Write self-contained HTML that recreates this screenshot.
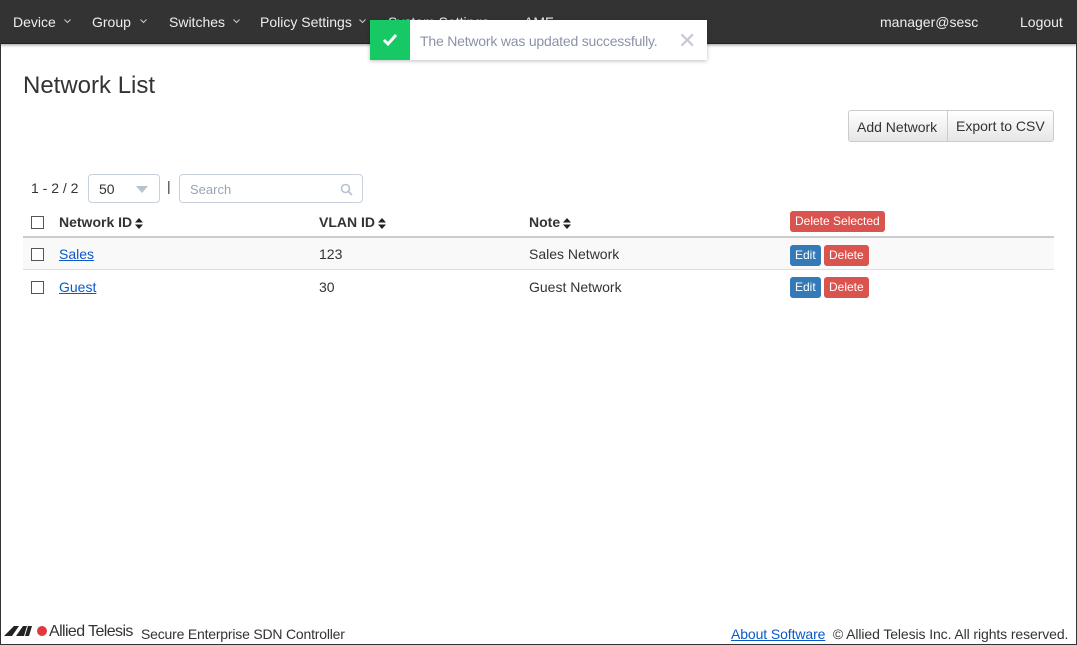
<!DOCTYPE html>
<html><head><meta charset="utf-8"><style>
*{box-sizing:border-box}
body{margin:0;width:1077px;height:645px;overflow:hidden;font-family:"Liberation Sans",sans-serif;color:#333;background:#fff;position:relative}
.frame{position:absolute;left:0;top:0;width:1077px;height:645px;border:1px solid #333;pointer-events:none}
.nav{position:absolute;left:0;top:0;width:1077px;height:44px;background:#333;border-bottom:1px solid #222;box-shadow:0 1px 3px rgba(0,0,0,.4)}
.nav span{position:absolute;top:14px;color:#eee;font-size:14px}
.nav svg{position:absolute;top:19px}
.toast{position:absolute;left:370px;top:20px;width:337px;height:40px;background:#fff;box-shadow:0 1px 4px rgba(0,0,0,.25);}
.toast .ic{position:absolute;left:0;top:0;width:40px;height:40px;background:#17c964}
.toast .t{position:absolute;left:50px;top:13px;font-size:14px;color:#8a93a6;letter-spacing:-.2px}
.toast .x{position:absolute;left:308px;top:8px;font-size:22px;color:#c4c9d2;font-weight:300}
h1{position:absolute;left:23px;top:72px;margin:0;font-size:24px;font-weight:normal;color:#333}
.bg{position:absolute;top:110px;height:32px;border:1px solid #ccc;background:linear-gradient(#fff,#e6e6e6);font-size:14px;padding:8px 8px;color:#333}
.cb{position:absolute;width:13px;height:13px;border:1px solid #555;background:#fff}
.sm{position:absolute;font-size:14px}
.btn{position:absolute;font-size:12px;color:#fff;border-radius:3px;height:21px;line-height:21px;padding:0 5px}
.red{background:#d9534f}.blue{background:#337ab7}
a{color:#0a58ca;text-decoration:underline}
.row{position:absolute;left:23px;width:1031px}
.srt{display:inline-block;vertical-align:middle;margin-left:3px}
</style></head><body>
<div class="nav">
<span style="left:13px">Device</span><svg style="left:64px" width="7" height="5"><path d="M.5 .5l3 3 3-3" stroke="#ccc" fill="none"/></svg>
<span style="left:92px">Group</span><svg style="left:140px" width="7" height="5"><path d="M.5 .5l3 3 3-3" stroke="#ccc" fill="none"/></svg>
<span style="left:169px">Switches</span><svg style="left:233px" width="7" height="5"><path d="M.5 .5l3 3 3-3" stroke="#ccc" fill="none"/></svg>
<span style="left:260px">Policy Settings</span><svg style="left:359px" width="7" height="5"><path d="M.5 .5l3 3 3-3" stroke="#ccc" fill="none"/></svg>
<span style="left:388px">System Settings</span>
<span style="left:524px">AMF</span>
<span style="left:880px">manager@sesc</span>
<span style="left:1020px">Logout</span>
</div>
<div class="toast"><div class="ic"><svg width="40" height="40"><path d="M14 20l4 4 8-9" stroke="#fff" stroke-width="3" fill="none"/></svg></div><div class="t">The Network was updated successfully.</div><div class="x">✕</div></div>
<h1>Network List</h1>
<div class="bg" style="left:848px;width:100px;border-radius:3px 0 0 3px">Add Network</div>
<div class="bg" style="left:947px;width:107px;border-radius:0 3px 3px 0;padding-top:7px">Export to CSV</div>
<div class="sm" style="left:31px;top:180px">1 - 2 / 2</div>
<div style="position:absolute;left:88px;top:174px;width:72px;height:29px;border:1px solid #c8d0dc;border-radius:4px;font-size:14px;padding:6px 10px">50<svg style="position:absolute;left:47px;top:11px" width="12" height="7"><path d="M0 0h12L6 7z" fill="#b8c2d0"/></svg></div>
<div class="sm" style="left:167px;top:178px">|</div>
<div style="position:absolute;left:179px;top:174px;width:184px;height:29px;border:1px solid #c8d0dc;border-radius:4px;font-size:13px;padding:7px 10px;color:#9aa4b4">Search<svg style="position:absolute;left:160px;top:8px" width="13" height="13"><circle cx="5.5" cy="5.5" r="4" stroke="#b8c2d0" stroke-width="1.6" fill="none"/><path d="M8.5 8.5l3.5 3.5" stroke="#b8c2d0" stroke-width="1.8"/></svg></div>
<div class="cb" style="left:31px;top:216px"></div>
<div class="sm" style="left:59px;top:214px;font-weight:bold">Network ID<svg class="srt" width="8" height="13"><path d="M0 5.5L4 1l4 4.5zM0 7.5L4 12l4-4.5z" fill="#222"/></svg></div>
<div class="sm" style="left:319px;top:214px;font-weight:bold">VLAN ID<svg class="srt" width="8" height="13"><path d="M0 5.5L4 1l4 4.5zM0 7.5L4 12l4-4.5z" fill="#222"/></svg></div>
<div class="sm" style="left:529px;top:214px;font-weight:bold">Note<svg class="srt" width="8" height="13"><path d="M0 5.5L4 1l4 4.5zM0 7.5L4 12l4-4.5z" fill="#222"/></svg></div>
<div class="btn red" style="left:790px;top:211px">Delete Selected</div>
<div class="row" style="top:236px;height:34px;background:#f9f9f9;border-top:2px solid #ccc;border-bottom:1px solid #ddd"></div>
<div class="cb" style="left:31px;top:248px"></div>
<div class="sm" style="left:59px;top:246px"><a>Sales</a></div>
<div class="sm" style="left:319px;top:246px">123</div>
<div class="sm" style="left:529px;top:246px">Sales Network</div>
<div class="btn blue" style="left:790px;top:245px">Edit</div>
<div class="btn red" style="left:824px;top:245px">Delete</div>
<div class="cb" style="left:31px;top:281px"></div>
<div class="sm" style="left:59px;top:279px"><a>Guest</a></div>
<div class="sm" style="left:319px;top:279px">30</div>
<div class="sm" style="left:529px;top:279px">Guest Network</div>
<div class="btn blue" style="left:790px;top:277px">Edit</div>
<div class="btn red" style="left:824px;top:277px">Delete</div>
<svg style="position:absolute;left:4px;top:625px" width="44" height="12"><path d="M0 11L10 1h5L8 11zM12 11L19 1h4l-3 10zM21 11l3-10h4l-3 10z" fill="#222"/><circle cx="38" cy="6" r="5" fill="#e03a3e"/></svg>
<div style="position:absolute;left:49px;top:623px;font-size:16px;letter-spacing:-.6px">Allied Telesis</div>
<div style="position:absolute;left:141px;top:626px;font-size:14px;letter-spacing:-.2px">Secure Enterprise SDN Controller</div>
<div style="position:absolute;left:731px;top:626px;font-size:14px;letter-spacing:-.1px"><a>About Software</a>&nbsp; © Allied Telesis Inc. All rights reserved.</div>
<div class="frame"></div>
</body></html>
